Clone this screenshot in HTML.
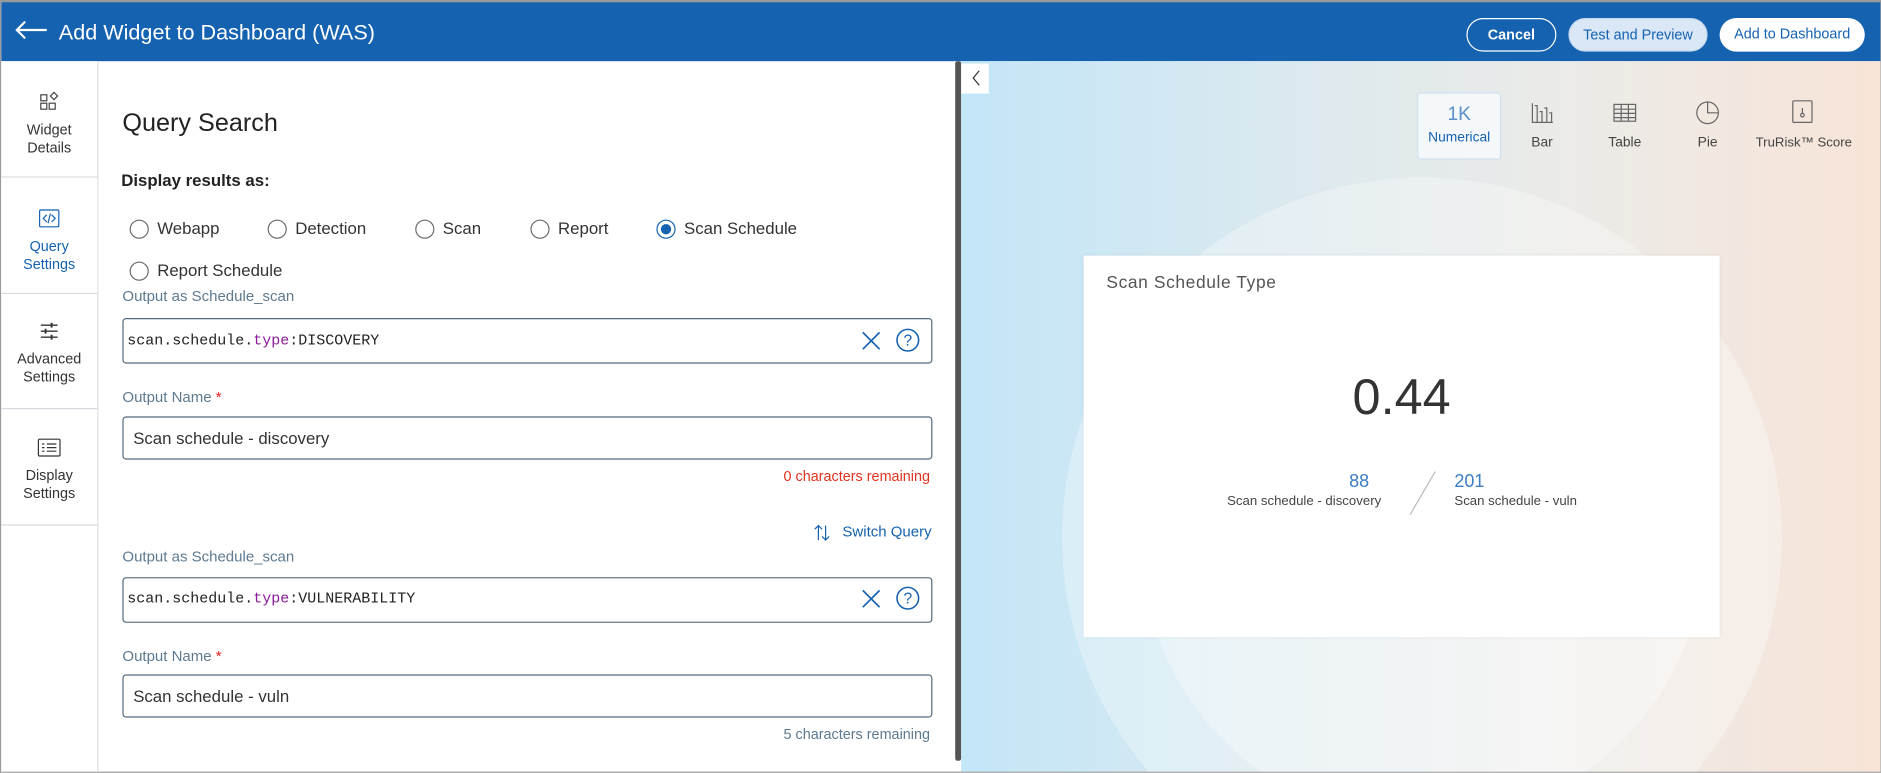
<!DOCTYPE html>
<html><head><meta charset="utf-8"><style>
*{box-sizing:border-box;margin:0;padding:0}
html,body{width:1881px;height:773px;overflow:hidden;background:#fff;font-family:"Liberation Sans",sans-serif}
#s{position:absolute;left:0;top:0;width:1568px;height:644px;transform:scale(1.2);transform-origin:0 0;border:1px solid #9a9a9a;overflow:hidden}
.a{position:absolute;white-space:nowrap}
.top{left:0;top:0;width:1568px;height:50px;background:#1562b0;border-top:1px solid #8a8a8a}
.btn{position:absolute;top:14px;height:28px;border-radius:14px;font-size:12px;line-height:26px;text-align:center}
.side{left:0;top:50px;width:81px;height:594px;border-right:1px solid #ddd;background:#fff}
.si{position:absolute;left:0;width:80px;height:97px;border-bottom:1px solid #d5dbe1;text-align:center;font-size:12px;color:#333;line-height:15px}
.si svg{display:block;margin:0 auto 6px}
.lbl{font-size:12.5px;color:#5e7a90}
.inp{position:absolute;left:101px;width:675px;border:1px solid #55697a;border-radius:3px;background:#fff}
.mono{font-family:"Liberation Mono",monospace;font-size:12.5px;color:#222}
.r{position:absolute;font-size:14px;color:#333}
.r i{position:absolute;left:-23px;top:0;width:16px;height:16px;border:1px solid #6b6b6b;border-radius:50%}
.ct{position:absolute;top:76px;width:70px;height:56px;text-align:center;font-size:11.5px;color:#444;white-space:nowrap}
</style></head><body><div id="s">
<div class="a top"></div>
<svg class="a" style="left:11px;top:15px" width="28" height="18" viewBox="0 0 28 18"><path d="M27 9H2M9 2L2 9l7 7" stroke="#fff" stroke-width="1.8" fill="none"/></svg>
<div class="a" style="left:48px;top:16px;font-size:18px;color:#fff">Add Widget to Dashboard (WAS)</div>
<div class="btn" style="left:1221px;width:75px;border:1px solid #fff;color:#fff;font-weight:bold">Cancel</div>
<div class="btn" style="left:1306px;width:116px;background:#d9e7f6;color:#1562b0;border:1px solid #c5d8ee">Test and Preview</div>
<div class="btn" style="left:1432px;width:121px;background:#fff;color:#1562b0">Add to Dashboard</div>

<div class="a side"></div>
<div class="si" style="top:50px;padding-top:24px"><svg width="20" height="20" viewBox="0 0 20 20" fill="none" stroke="#444" stroke-width="1"><rect x="3" y="4" width="5" height="5"/><rect x="3" y="11" width="5" height="5"/><rect x="10" y="11" width="5" height="5"/><path d="M14 2l3 3-3 3-3-3z"/></svg>Widget<br>Details</div>
<div class="si" style="top:147px;padding-top:24px;color:#1562b0;background:#fff"><svg width="20" height="20" viewBox="0 0 20 20" fill="none" stroke="#1562b0" stroke-width="1"><rect x="2" y="3" width="16" height="14" rx="1"/><path d="M8 7l-3 3 3 3M12 7l3 3-3 3M11 6l-2 8"/></svg>Query<br>Settings</div>
<div class="si" style="top:243px;padding-top:22px"><svg width="20" height="20" viewBox="0 0 20 20" fill="none" stroke="#333" stroke-width="1.2"><path d="M3 5h14M3 10h14M3 15h14"/><path d="M12 3v4M7 8v4M12 13v4" stroke-width="1.6"/></svg>Advanced<br>Settings</div>
<div class="si" style="top:340px;padding-top:22px"><svg width="20" height="20" viewBox="0 0 20 20" fill="none" stroke="#333" stroke-width="1"><rect x="1" y="3" width="18" height="14" rx="1"/><path d="M4 7h2M8 7h8M4 10h2M8 10h8M4 13h2M8 13h8"/></svg>Display<br>Settings</div>

<div class="a" style="left:101px;top:90px;font-size:21px;color:#222">Query Search</div>
<div class="a" style="left:100px;top:141px;font-size:14px;color:#222;font-weight:bold">Display results as:</div>
<div class="r" style="left:130px;top:181px"><i style="top:1px"></i>Webapp</div>
<div class="r" style="left:245px;top:181px"><i style="top:1px"></i>Detection</div>
<div class="r" style="left:368px;top:181px"><i style="top:1px"></i>Scan</div>
<div class="r" style="left:464px;top:181px"><i style="top:1px"></i>Report</div>
<div class="r" style="left:569px;top:181px"><i style="top:1px;border-color:#1562b0;background:radial-gradient(circle,#1562b0 4px,#fff 4.5px)"></i>Scan Schedule</div>
<div class="r" style="left:130px;top:216px"><i style="top:1px"></i>Report Schedule</div>

<div class="a lbl" style="left:101px;top:239px">Output as Schedule_scan</div>
<div class="inp" style="top:264px;height:38px"></div>
<div class="a mono" style="left:105px;top:276px">scan.schedule.<span style="color:#8a1a9a">type</span>:DISCOVERY</div>
<svg class="a" style="left:715px;top:273px" width="20" height="20"><path d="M3 3l14 14M17 3L3 17" stroke="#1562b0" stroke-width="1.4"/></svg>
<svg class="a" style="left:745px;top:272px" width="21" height="21"><circle cx="10.5" cy="10.5" r="9" fill="none" stroke="#1562b0" stroke-width="1.3"/><text x="10.5" y="15" text-anchor="middle" font-size="13" fill="#1562b0" font-family="Liberation Sans">?</text></svg>

<div class="a lbl" style="left:101px;top:323px">Output Name <span style="color:#d22">*</span></div>
<div class="inp" style="top:346px;height:36px"></div>
<div class="a" style="left:110px;top:356px;font-size:14px;color:#333">Scan schedule - discovery</div>
<div class="a" style="right:792px;top:389px;font-size:12px;color:#e0321e">0 characters remaining</div>
<svg class="a" style="left:676px;top:435px" width="16" height="16" fill="none" stroke="#1562b0" stroke-width="1"><path d="M5 14V2M2 5l3-3 3 3M11 2v12M8 11l3 3 3-3"/></svg>
<div class="a" style="left:701px;top:435px;font-size:12.5px;color:#1562b0">Switch Query</div>

<div class="a lbl" style="left:101px;top:456px">Output as Schedule_scan</div>
<div class="inp" style="top:480px;height:38px"></div>
<div class="a mono" style="left:105px;top:491px">scan.schedule.<span style="color:#8a1a9a">type</span>:VULNERABILITY</div>
<svg class="a" style="left:715px;top:488px" width="20" height="20"><path d="M3 3l14 14M17 3L3 17" stroke="#1562b0" stroke-width="1.4"/></svg>
<svg class="a" style="left:745px;top:487px" width="21" height="21"><circle cx="10.5" cy="10.5" r="9" fill="none" stroke="#1562b0" stroke-width="1.3"/><text x="10.5" y="15" text-anchor="middle" font-size="13" fill="#1562b0" font-family="Liberation Sans">?</text></svg>
<div class="a lbl" style="left:101px;top:539px">Output Name <span style="color:#d22">*</span></div>
<div class="inp" style="top:561px;height:36px"></div>
<div class="a" style="left:110px;top:571px;font-size:14px;color:#333">Scan schedule - vuln</div>
<div class="a" style="right:792px;top:604px;font-size:12px;color:#5e7a90">5 characters remaining</div>
<div class="a" style="left:795px;top:50px;width:5px;height:583px;background:#555;border-radius:2px"></div>

<div class="a" style="left:800px;top:50px;width:768px;height:594px;background:linear-gradient(90deg,#c3e6f8 0%,#dbe9ef 35%,#ebebe8 65%,#f8e4d8 100%);overflow:hidden">
<div class="a" style="left:84px;top:97px;width:600px;height:600px;border-radius:50%;background:rgba(255,255,255,0.3)"></div>
<div class="a" style="left:150px;top:165px;width:470px;height:470px;border-radius:50%;background:rgba(255,255,255,0.3)"></div>
</div>
<div class="a" style="left:800px;top:52px;width:23px;height:25px;background:#fff"></div>
<svg class="a" style="left:808px;top:56px" width="10" height="16"><path d="M7 2L2 8l5 6" stroke="#333" fill="none" stroke-width="1"/></svg>

<div class="ct" style="left:1180px;background:#f5f8fb;border:1px solid #cfe0f0;border-radius:3px;color:#1562b0"><div style="font-size:16px;color:#5a8fc7;margin-top:9px;height:22px">1K</div>Numerical</div>
<div class="ct" style="left:1249px"><svg width="22" height="20" style="margin-top:7px" fill="none" stroke="#666" stroke-width="1"><path d="M3 2v16h17M5 4h2v14M9 9h2v9M13 6h2v12M17 10h2v8"/></svg><div style="margin-top:6px">Bar</div></div>
<div class="ct" style="left:1318px"><svg width="22" height="20" style="margin-top:7px" fill="none" stroke="#666" stroke-width="1"><rect x="2" y="3" width="18" height="14"/><path d="M2 7h18M2 10.5h18M2 14h18M8 3v14M14 3v14"/></svg><div style="margin-top:6px">Table</div></div>
<div class="ct" style="left:1387px"><svg width="22" height="22" style="margin-top:5px" fill="none" stroke="#666" stroke-width="1"><circle cx="11" cy="12" r="9"/><path d="M11 3v9h9"/></svg><div style="margin-top:6px">Pie</div></div>
<div class="ct" style="left:1462px;width:78px;font-size:11px"><svg width="22" height="22" style="margin-top:5px" fill="none" stroke="#666" stroke-width="1"><rect x="3" y="2" width="16" height="18" rx="1"/><path d="M11 8v5"/><circle cx="11" cy="14" r="1.5"/></svg><div style="margin-top:6px">TruRisk™ Score</div></div>

<div class="a" style="left:902px;top:212px;width:530px;height:318px;background:#fff;box-shadow:0 0 3px rgba(0,0,0,0.08)"></div>
<div class="a" style="left:921px;top:227px;font-size:14.5px;color:#555;letter-spacing:0.5px">Scan Schedule Type</div>
<div class="a" style="left:1067px;top:306px;width:200px;text-align:center;font-size:42px;color:#333">0.44</div>
<div class="a" style="left:1040px;top:392px;width:100px;text-align:right;font-size:15px;color:#3b7cc4">88</div>
<div class="a" style="left:980px;top:411px;width:170px;text-align:right;font-size:11px;color:#444">Scan schedule - discovery</div>
<svg class="a" style="left:1172px;top:390px" width="25" height="40"><path d="M23 2L2 38" stroke="#bbb" stroke-width="1"/></svg>
<div class="a" style="left:1211px;top:392px;font-size:15px;color:#3b7cc4">201</div>
<div class="a" style="left:1211px;top:411px;font-size:11px;color:#444">Scan schedule - vuln</div>
</div></body></html>
